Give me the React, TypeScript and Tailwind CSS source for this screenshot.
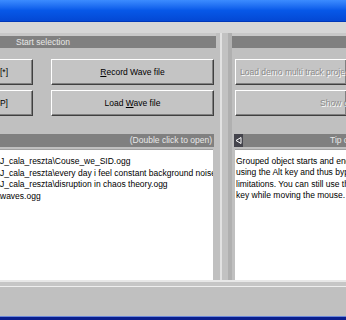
const Btn = ({ children, className = "" }: { children: React.ReactNode; className?: string }) => (
  <div
    className={
      "h-[26px] flex items-center bg-[#c4c4c4] border-t border-l border-t-white border-l-white border-r border-b border-r-[#404040] border-b-[#404040] shadow-[inset_-1px_-1px_0_#808080] " +
      className
    }
  >
    {children}
  </div>
);

const Disabled = ({ children }: { children: React.ReactNode }) => (
  <span className="text-[#8a8a8a] [text-shadow:1px_1px_0_#ffffff] whitespace-nowrap">{children}</span>
);

const App = () => {
  const files = [
    "D:\\muza\\J_cala_reszta\\Couse_we_SID.ogg",
    "D:\\muza\\J_cala_reszta\\every day i feel constant background noise.ogg",
    "D:\\muza\\J_cala_reszta\\disruption in chaos theory.ogg",
    "D:\\muza\\waves.ogg",
  ];

  return (
    <div className="w-[346px] h-[320px] overflow-hidden bg-[#c0c0c0] flex flex-col font-['Liberation_Sans',Arial,sans-serif] text-[8.5px] text-black">
      {/* title bar */}
      <div className="h-[22px] shrink-0 bg-gradient-to-b from-[#3c8cff] via-[#0758e8] to-[#0448d4] border-b border-[#0037b8]" />
      <div className="h-[11px] shrink-0 bg-[#d6d6d6]" />
      <div className="h-[3px] shrink-0 bg-[#c8c8c8]" />

      <div className="flex-1 flex min-h-0">
        {/* left panel */}
        <div className="w-[216px] shrink-0 flex flex-col">
          <div className="h-[12px] bg-[#808080] text-[#e8e8e8] pl-[16px] leading-[12px] whitespace-nowrap">
            Start selection
          </div>
          <div className="flex flex-col gap-[5px] pt-[11px] pr-[2px]">
            <div className="flex gap-[18px]">
              <Btn className="w-[33px] border-l-0 justify-end pr-[24px] overflow-hidden">
                <span className="whitespace-nowrap">[*]</span>
              </Btn>
              <Btn className="flex-1 justify-center">
                <span>
                  <span className="underline">R</span>ecord Wave file
                </span>
              </Btn>
            </div>
            <div className="flex gap-[18px]">
              <Btn className="w-[33px] border-l-0 justify-end pr-[24px] overflow-hidden">
                <span className="whitespace-nowrap">[P]</span>
              </Btn>
              <Btn className="flex-1 justify-center">
                <span>
                  Load <span className="underline">W</span>ave file
                </span>
              </Btn>
            </div>
          </div>
          <div className="mt-[18px] mr-[2px] h-[13px] bg-[#808080] text-[#e8e8e8] leading-[13px] text-right pr-[2px] whitespace-nowrap">
            (Double click to open)
          </div>
          <div className="mt-[2px] mr-[3px] flex-1 bg-white border-t border-[#a0a0a0] overflow-hidden pt-[6px] leading-[11.7px]">
            {files.map((f) => (
              <div key={f} className="whitespace-nowrap -ml-[34px]">
                {f}
              </div>
            ))}
          </div>
        </div>

        {/* splitter */}
        <div className="w-[16px] shrink-0 flex -mt-[3px]">
          <div className="w-[4px] bg-[#c0c0c0]" />
          <div className="w-[2px] bg-[#e2e2e2]" />
          <div className="w-[6px] bg-[#c2c2c2]" />
          <div className="w-[4px] bg-[#b0b0b0]" />
        </div>

        {/* right panel */}
        <div className="flex-1 flex flex-col min-w-0">
          <div className="h-[12px] bg-[#808080]" />
          <div className="flex flex-col gap-[5px] pt-[11px] pl-[3px]">
            <Btn className="border-r-0 pl-[4px] overflow-hidden">
              <Disabled>Load demo multi track project</Disabled>
            </Btn>
            <Btn className="border-r-0 pl-[84px] overflow-hidden">
              <Disabled>Show demo</Disabled>
            </Btn>
          </div>
          <div className="mt-[18px] ml-[2px] h-[13px] flex">
            <div className="w-[9px] bg-[#44444c] flex items-center justify-center">
              <svg width="7" height="7" viewBox="0 0 7 7">
                <path d="M6 0.5 L1 3.5 L6 6.5 Z" fill="none" stroke="#ffffff" strokeWidth="1" />
              </svg>
            </div>
            <div className="flex-1 bg-[#808080] text-[#e8e8e8] leading-[13px] pl-[87px] whitespace-nowrap overflow-hidden">
              Tip of the day
            </div>
          </div>
          <div className="mt-[2px] ml-[3px] flex-1 bg-white border-t border-[#a0a0a0] overflow-hidden pt-[6px] pl-[1px] leading-[11.3px]">
            <div className="whitespace-nowrap">Grouped object starts and ends can be moved</div>
            <div className="whitespace-nowrap">using the Alt key and thus bypass the</div>
            <div className="whitespace-nowrap">limitations. You can still use the Shift</div>
            <div className="whitespace-nowrap">key while moving the mouse.</div>
          </div>
        </div>
      </div>

      {/* status area */}
      <div className="h-[36px] shrink-0 flex flex-col">
        <div className="h-[2px] bg-[#e8e8e8]" />
        <div className="h-[4px] bg-[#c6c6c6]" />
        <div className="h-[1px] bg-[#eeeeee]" />
        <div className="flex-1 bg-[#c0c0c0]" />
      </div>
      <div className="h-[1px] shrink-0 bg-[#6c88d8]" />
      <div className="h-[3px] shrink-0 bg-[#0a1f8e]" />
    </div>
  );
};

export default App;
